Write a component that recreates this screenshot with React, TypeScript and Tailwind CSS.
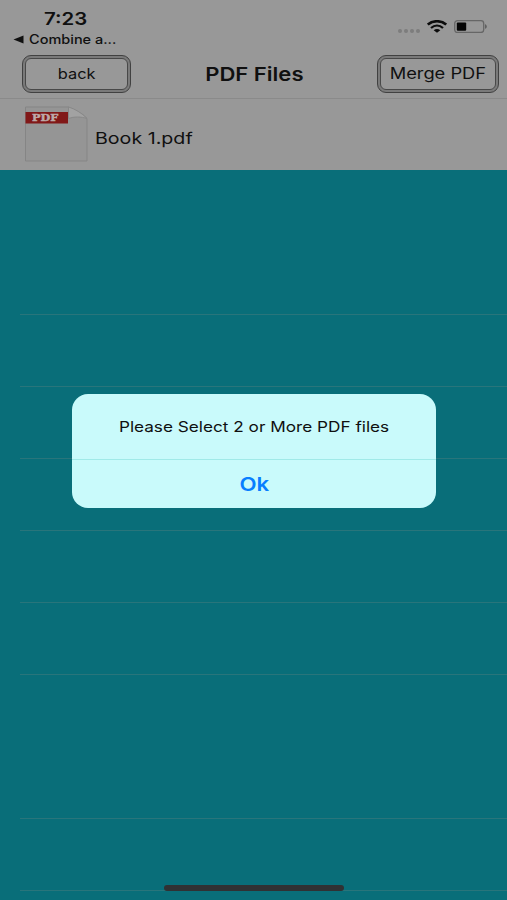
import type { ReactNode } from 'react';

const separators = [144, 72, 72, 72, 72, 72, 144, 72];

function WifiIcon() {
  return (
    <svg width="20" height="13" viewBox="0 0 20 13" fill="none" stroke="#0c0c0c">
      <path d="M.8 4.6C6 .1 14 .1 19.2 4.6" strokeWidth="2.6" />
      <path d="M4 8C7.6 4.8 12.4 4.8 16 8" strokeWidth="2.3" />
      <path d="M10 12.8 6.7 10.2C8.6 8.7 11.4 8.7 13.3 10.2Z" fill="#0c0c0c" stroke="none" />
    </svg>
  );
}

function BatteryIcon() {
  return (
    <svg width="34" height="13" viewBox="0 0 34 13">
      <rect x=".7" y=".7" width="29" height="11.8" rx="2.8" fill="none" stroke="#666" strokeWidth="1.3" />
      <rect x="2.8" y="2.4" width="9.4" height="8.4" rx="1" fill="#050505" />
      <path d="M31 4.2C33.4 4.8 33.4 8.2 31 8.8Z" fill="#606060" />
    </svg>
  );
}

function PdfIcon() {
  return (
    <div className="relative h-[57px] w-[64px] shrink-0">
      <svg className="absolute inset-0" width="64" height="57" viewBox="0 0 64 57">
        <path d="M1.5 1H44.5C51 4 58 7 63 12.5V55H1.5Z" fill="#959595" stroke="#858585" />
        <path d="M44.5 1V12.5C50 10.5 57 10.5 63 12.5C58 7 51 3 44.5 1Z" fill="#a2a2a2" stroke="#888888" />
        <rect x="1.5" y="6" width="42.5" height="11.5" fill="#811818" />
      </svg>
      <span className="absolute left-[8px] top-[5.5px] origin-left scale-x-[1.32] font-['DejaVu_Serif',serif] text-[8.5px] font-bold leading-[12px] text-[#bdaaaa] [-webkit-text-stroke:0.4px_#bdaaaa]">
        PDF
      </span>
    </div>
  );
}

function FrameButton({ className, children }: { className: string; children: ReactNode }) {
  return (
    <button className={`flex h-[38px] rounded-[9px] border-[1.5px] border-[#414141] bg-[#7a7a7a] p-[2px] ${className}`}>
      <span className="flex size-full items-center justify-center rounded-[6px] border border-[#484848] bg-[#989898]">
        {children}
      </span>
    </button>
  );
}

export default function App() {
  return (
    <div className="relative flex h-[900px] w-[507px] flex-col overflow-hidden bg-[#096e79] font-['Inter','Liberation_Sans',sans-serif] text-[#101010]">
      <header className="flex h-[99px] flex-col border-b border-[#8a8a8a] bg-[#989898]">
        <div className="flex h-[54px] items-start justify-between pl-[13px] pr-[19px]">
          <div className="flex flex-col">
            <span className="ml-[31px] mt-[9px] w-fit origin-left scale-x-[1.2] text-[17px] font-semibold leading-[20px]">7:23</span>
            <div className="mt-[2px] flex items-center">
              <svg width="11" height="9" viewBox="0 0 11 9"><path d="M.5 4.5 10.5.5V8.5Z" fill="#101010" /></svg>
              <span className="ml-[5px] mt-px origin-left scale-x-[1.16] text-[12.5px] font-medium leading-[16px]">Combine a...</span>
            </div>
          </div>
          <div className="mt-[20px] flex items-center">
            <div className="mr-[7px] mt-[8px] flex gap-[2px]">
              <i className="size-[4px] rounded-full bg-[#7d7d7d]" />
              <i className="size-[4px] rounded-full bg-[#7d7d7d]" />
              <i className="size-[4px] rounded-full bg-[#7d7d7d]" />
              <i className="size-[4px] rounded-full bg-[#7d7d7d]" />
            </div>
            <WifiIcon />
            <div className="ml-[7px]"><BatteryIcon /></div>
          </div>
        </div>
        <div className="flex h-[39px] items-center justify-between pl-[22px] pr-[8px]">
          <FrameButton className="w-[109px]">
            <span className="scale-x-[1.13] text-[14.5px]">back</span>
          </FrameButton>
          <h1 className="mt-[3px] scale-x-[1.16] text-[19px] font-semibold">PDF Files</h1>
          <FrameButton className="w-[122px]">
            <span className="whitespace-nowrap scale-x-[1.18] text-[15.5px]">Merge PDF</span>
          </FrameButton>
        </div>
      </header>

      <main>
        <div className="flex h-[71px] items-center bg-[#989898] pl-[24px]">
          <PdfIcon />
          <span className="ml-[7px] mt-[7px] origin-left scale-x-[1.19] text-[16.5px]">Book 1.pdf</span>
        </div>
        <div className="ml-[20px] mt-px">
          {separators.map((height, i) => (
            <div key={i} className="border-b-[1.5px] border-[#29757b]" style={{ height }} />
          ))}
        </div>
      </main>

      <div role="alertdialog" className="absolute left-[72px] top-[393.5px] flex h-[114px] w-[364px] flex-col overflow-hidden rounded-[16px] bg-[#c9fafb]">
        <p className="flex h-[66px] items-center justify-center border-b border-[#a0eae8] pt-[2px]">
          <span className="whitespace-nowrap scale-x-[1.185] text-[14.5px]">Please Select 2 or More PDF files</span>
        </p>
        <button className="flex flex-1 items-center justify-center pt-[2px] text-[#087eff]">
          <span className="scale-x-[1.2] text-[18.5px] font-semibold">Ok</span>
        </button>
      </div>
      <div className="absolute left-[164px] top-[885px] h-[6px] w-[180px] rounded-full bg-[#303133]" />
    </div>
  );
}
